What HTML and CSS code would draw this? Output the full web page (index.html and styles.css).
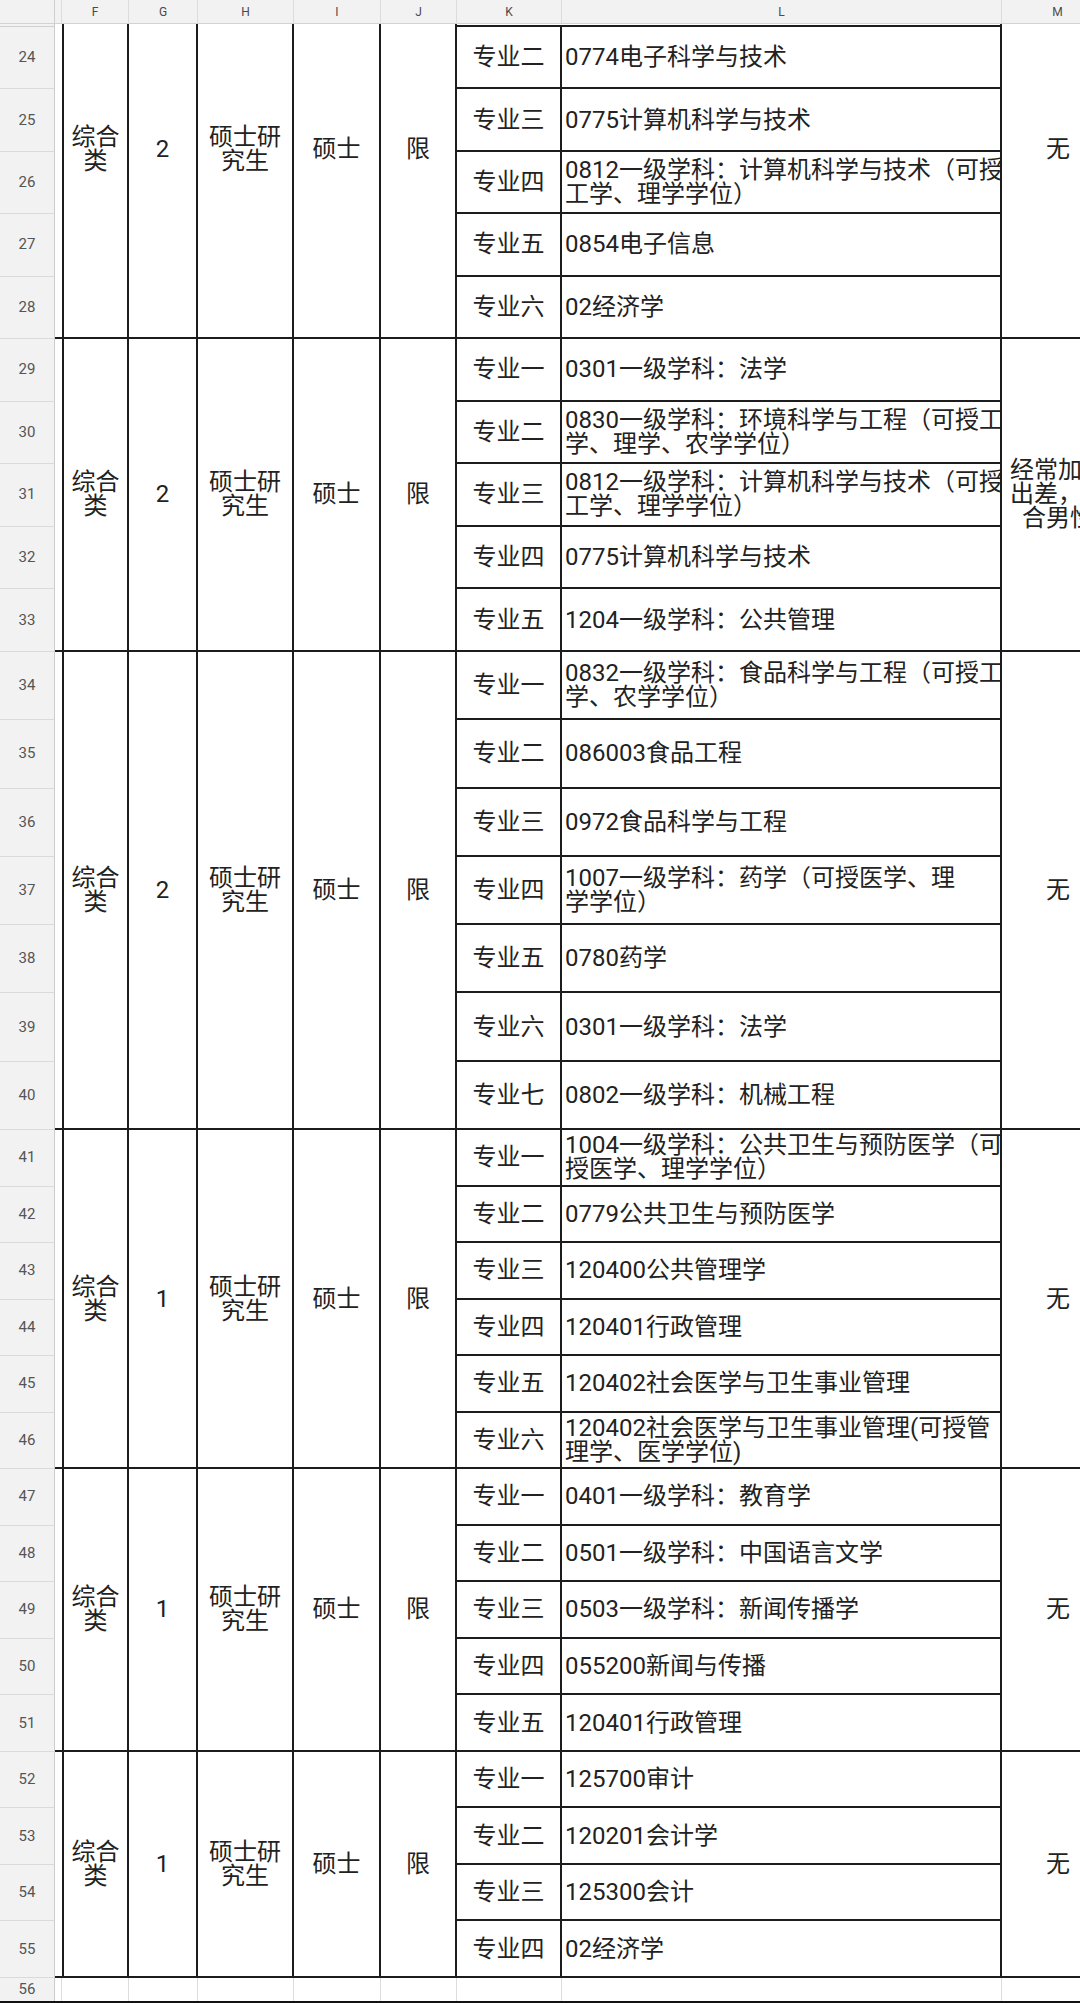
FILE: index.html
```html
<!DOCTYPE html>
<html lang="zh-CN">
<head>
<meta charset="utf-8">
<title>Sheet</title>
<link rel="stylesheet" href="styles.css">
</head>
<body>
<div class="sheet">
  <div class="cols hdr">
    <div class="hc corner"></div>
    <div class="hc"></div>
    <div class="hc">F</div>
    <div class="hc">G</div>
    <div class="hc">H</div>
    <div class="hc">I</div>
    <div class="hc">J</div>
    <div class="hc">K</div>
    <div class="hc">L</div>
    <div class="hc">M</div>
  </div>

  <div class="cols grp g1">
    <div class="e"></div>
    <div class="mc f first">综合<br>类</div>
    <div class="mc g first">2</div>
    <div class="mc h first">硕士研<br>究生</div>
    <div class="mc i first">硕士</div>
    <div class="mc j first">限</div>
    <div class="mc m first">无</div>
    <div class="rh sl"></div><div class="k sl"></div><div class="l sl"></div>
    <div class="rh">24</div><div class="k">专业二</div><div class="l">0774电子科学与技术</div>
    <div class="rh">25</div><div class="k">专业三</div><div class="l">0775计算机科学与技术</div>
    <div class="rh">26</div><div class="k">专业四</div><div class="l">0812一级学科：计算机科学与技术（可授<br>工学、理学学位）</div>
    <div class="rh">27</div><div class="k">专业五</div><div class="l">0854电子信息</div>
    <div class="rh">28</div><div class="k">专业六</div><div class="l">02经济学</div>
  </div>

  <div class="cols grp g2">
    <div class="e"></div>
    <div class="mc f">综合<br>类</div>
    <div class="mc g">2</div>
    <div class="mc h">硕士研<br>究生</div>
    <div class="mc i">硕士</div>
    <div class="mc j">限</div>
    <div class="mc m">经常加班<br>出差，适<br>合男性</div>
    <div class="rh">29</div><div class="k">专业一</div><div class="l">0301一级学科：法学</div>
    <div class="rh">30</div><div class="k">专业二</div><div class="l">0830一级学科：环境科学与工程（可授工<br>学、理学、农学学位）</div>
    <div class="rh">31</div><div class="k">专业三</div><div class="l">0812一级学科：计算机科学与技术（可授<br>工学、理学学位）</div>
    <div class="rh">32</div><div class="k">专业四</div><div class="l">0775计算机科学与技术</div>
    <div class="rh">33</div><div class="k">专业五</div><div class="l">1204一级学科：公共管理</div>
  </div>

  <div class="cols grp g3">
    <div class="e"></div>
    <div class="mc f">综合<br>类</div>
    <div class="mc g">2</div>
    <div class="mc h">硕士研<br>究生</div>
    <div class="mc i">硕士</div>
    <div class="mc j">限</div>
    <div class="mc m">无</div>
    <div class="rh">34</div><div class="k">专业一</div><div class="l">0832一级学科：食品科学与工程（可授工<br>学、农学学位）</div>
    <div class="rh">35</div><div class="k">专业二</div><div class="l">086003食品工程</div>
    <div class="rh">36</div><div class="k">专业三</div><div class="l">0972食品科学与工程</div>
    <div class="rh">37</div><div class="k">专业四</div><div class="l">1007一级学科：药学（可授医学、理<br>学学位）</div>
    <div class="rh">38</div><div class="k">专业五</div><div class="l">0780药学</div>
    <div class="rh">39</div><div class="k">专业六</div><div class="l">0301一级学科：法学</div>
    <div class="rh">40</div><div class="k">专业七</div><div class="l">0802一级学科：机械工程</div>
  </div>

  <div class="cols grp g4">
    <div class="e"></div>
    <div class="mc f">综合<br>类</div>
    <div class="mc g">1</div>
    <div class="mc h">硕士研<br>究生</div>
    <div class="mc i">硕士</div>
    <div class="mc j">限</div>
    <div class="mc m">无</div>
    <div class="rh">41</div><div class="k">专业一</div><div class="l">1004一级学科：公共卫生与预防医学（可<br>授医学、理学学位）</div>
    <div class="rh">42</div><div class="k">专业二</div><div class="l">0779公共卫生与预防医学</div>
    <div class="rh">43</div><div class="k">专业三</div><div class="l">120400公共管理学</div>
    <div class="rh">44</div><div class="k">专业四</div><div class="l">120401行政管理</div>
    <div class="rh">45</div><div class="k">专业五</div><div class="l">120402社会医学与卫生事业管理</div>
    <div class="rh">46</div><div class="k">专业六</div><div class="l">120402社会医学与卫生事业管理(可授管<br>理学、医学学位)</div>
  </div>

  <div class="cols grp g5">
    <div class="e"></div>
    <div class="mc f">综合<br>类</div>
    <div class="mc g">1</div>
    <div class="mc h">硕士研<br>究生</div>
    <div class="mc i">硕士</div>
    <div class="mc j">限</div>
    <div class="mc m">无</div>
    <div class="rh">47</div><div class="k">专业一</div><div class="l">0401一级学科：教育学</div>
    <div class="rh">48</div><div class="k">专业二</div><div class="l">0501一级学科：中国语言文学</div>
    <div class="rh">49</div><div class="k">专业三</div><div class="l">0503一级学科：新闻传播学</div>
    <div class="rh">50</div><div class="k">专业四</div><div class="l">055200新闻与传播</div>
    <div class="rh">51</div><div class="k">专业五</div><div class="l">120401行政管理</div>
  </div>

  <div class="cols grp g6">
    <div class="e"></div>
    <div class="mc f">综合<br>类</div>
    <div class="mc g">1</div>
    <div class="mc h">硕士研<br>究生</div>
    <div class="mc i">硕士</div>
    <div class="mc j">限</div>
    <div class="mc m">无</div>
    <div class="rh">52</div><div class="k">专业一</div><div class="l">125700审计</div>
    <div class="rh">53</div><div class="k">专业二</div><div class="l">120201会计学</div>
    <div class="rh">54</div><div class="k">专业三</div><div class="l">125300会计</div>
    <div class="rh">55</div><div class="k">专业四</div><div class="l">02经济学</div>
  </div>

  <div class="cols tail">
    <div class="rh">56</div>
    <div class="tc"></div>
    <div class="tc"></div>
    <div class="tc"></div>
    <div class="tc"></div>
    <div class="tc"></div>
    <div class="tc"></div>
    <div class="tc"></div>
    <div class="tc"></div>
    <div class="tc"></div>
  </div>
  <div class="edge"></div>
</div>
</body>
</html>
```

FILE: styles.css
```css
* { box-sizing: border-box; }
html, body {
  margin: 0;
  padding: 0;
  width: 1080px;
  height: 2003px;
  overflow: hidden;
  background: #ffffff;
}
.sheet {
  width: 1114px;
  font-family: Roboto, "Noto Sans CJK SC", "Noto Sans", sans-serif;
  color: #222222;
  display: flex;
  flex-direction: column;
}
.cols {
  display: grid;
  grid-template-columns: 55px 7px 67px 69px 96px 87px 76px 105px 440px 112px;
}

/* column header */
.hdr { height: 24px; }
.hc {
  background: #f2f2f2;
  border-right: 1px solid #dcdcdc;
  border-bottom: 1px solid #d2d2d2;
  font-size: 12px;
  color: #4a4a4a;
  display: flex;
  align-items: center;
  justify-content: center;
  line-height: 1;
}
.hc.corner { border-right: 1px solid #cfcfcf; }

/* groups */
.g1 { grid-template-rows: 3px repeat(5, 62.4px); }
.g2 { grid-template-rows: repeat(5, 62.6px); }
.g3 { grid-template-rows: repeat(7, 68.3px); }
.g4 { grid-template-rows: repeat(6, 56.5px); }
.g5 { grid-template-rows: repeat(5, 56.6px); }
.g6 { grid-template-rows: repeat(4, 56.5px); }

.rh {
  grid-column: 1;
  background: #f2f2f2;
  border-right: 1px solid #cccccc;
  border-bottom: 1px solid #dadada;
  font-size: 15px;
  color: #555555;
  display: flex;
  align-items: center;
  justify-content: center;
  line-height: 1;
}
.e {
  grid-column: 2;
  grid-row: 1 / -1;
  border-bottom: 2px solid #1c1c1c;
}
.mc {
  grid-row: 1 / -1;
  font-size: 24px;
  line-height: 24px;
  text-align: center;
  display: flex;
  align-items: center;
  justify-content: center;
  border-bottom: 2px solid #1c1c1c;
  border-right: 2px solid #1c1c1c;
}
.mc.first { padding-bottom: 63px; }
.f { grid-column: 3; border-left: 2px solid #1c1c1c; }
.g { grid-column: 4; }
.h { grid-column: 5; }
.i { grid-column: 6; }
.j { grid-column: 7; }
.m {
  grid-column: 10;
  border-right: none;
  white-space: nowrap;
  overflow: hidden;
}

.k, .l {
  font-size: 24px;
  line-height: 24px;
  border-bottom: 2px solid #1c1c1c;
  border-right: 2px solid #1c1c1c;
  display: flex;
  align-items: center;
  white-space: nowrap;
  overflow: hidden;
}
.k {
  grid-column: 8;
  justify-content: center;
}
.l {
  grid-column: 9;
  padding-left: 3px;
}
.k.sl { border-right: none; }
.rh.sl { border-bottom: 1px solid #d0d0d0; }

/* trailing row */
.tail { height: 23px; }
.tc { border-right: 1px solid #dddddd; }
.tail .rh { border-bottom: none; }
.edge {
  height: 2px;
  background: #111111;
}
```
